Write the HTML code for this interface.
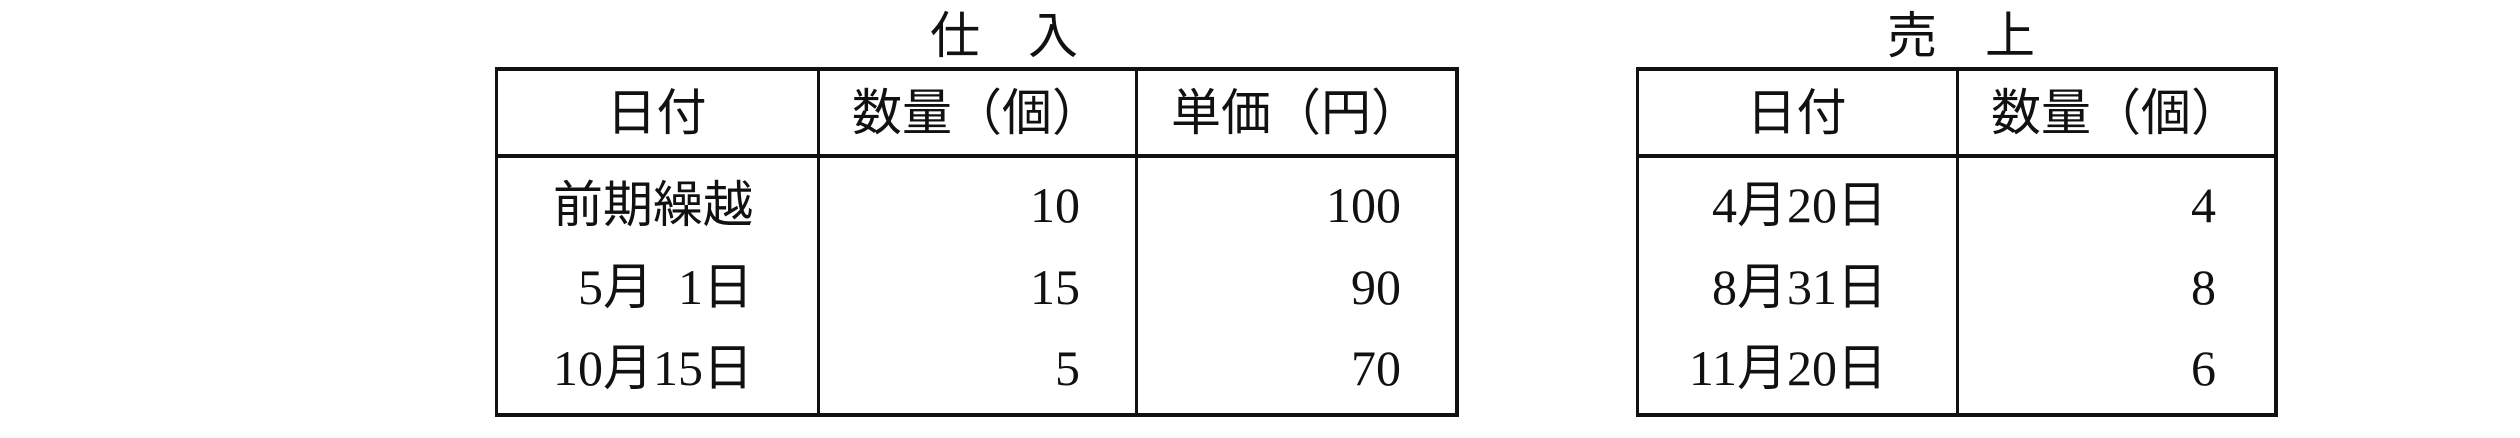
<!DOCTYPE html>
<html><head><meta charset="utf-8"><style>
html,body{margin:0;padding:0;background:#fff;}
body{width:2520px;height:438px;position:relative;overflow:hidden;font-family:"Liberation Serif","Noto Sans CJK JP",serif;color:#111;}
.t{position:absolute;font-size:50px;line-height:60px;height:60px;white-space:pre;}
.j{font-family:"Liberation Serif","Noto Sans CJK JP",sans-serif;}
.h{position:absolute;background:#111;}
</style></head><body>
<div class="h" style="left:495px;top:67px;width:964px;height:4px"></div>
<div class="h" style="left:495px;top:154px;width:964px;height:4px"></div>
<div class="h" style="left:495px;top:413px;width:964px;height:4px"></div>
<div class="h" style="left:495px;top:67px;width:3px;height:350px"></div>
<div class="h" style="left:817px;top:67px;width:3px;height:350px"></div>
<div class="h" style="left:1135px;top:67px;width:3px;height:350px"></div>
<div class="h" style="left:1455px;top:67px;width:4px;height:350px"></div>
<div class="h" style="left:1636px;top:67px;width:642px;height:4px"></div>
<div class="h" style="left:1636px;top:154px;width:642px;height:4px"></div>
<div class="h" style="left:1636px;top:413px;width:642px;height:4px"></div>
<div class="h" style="left:1636px;top:67px;width:3px;height:350px"></div>
<div class="h" style="left:1956px;top:67px;width:3px;height:350px"></div>
<div class="h" style="left:2274px;top:67px;width:4px;height:350px"></div>

<div class="t j" style="left:930px;top:6px">仕</div>
<div class="t j" style="left:1028px;top:6px">入</div>
<div class="t j" style="left:1887px;top:6px">売</div>
<div class="t j" style="left:1985px;top:6px">上</div>

<div class="t j" style="left:495px;width:323px;top:83px;text-align:center">日付</div>
<div class="t j" style="left:818px;width:318px;top:83px;text-align:center">数量（個）</div>
<div class="t j" style="left:1136px;width:320px;top:83px;text-align:center">単価（円）</div>
<div class="t j" style="left:495px;width:258px;top:175px;text-align:right">前期繰越</div>
<div class="t j" style="left:495px;width:258px;top:257px;text-align:right">5月  1日</div>
<div class="t j" style="left:495px;width:258px;top:338px;text-align:right">10月15日</div>
<div class="t" style="left:818px;width:262px;top:175px;text-align:right">10</div>
<div class="t" style="left:818px;width:262px;top:257px;text-align:right">15</div>
<div class="t" style="left:818px;width:262px;top:338px;text-align:right">5</div>
<div class="t" style="left:1136px;width:265px;top:175px;text-align:right">100</div>
<div class="t" style="left:1136px;width:265px;top:257px;text-align:right">90</div>
<div class="t" style="left:1136px;width:265px;top:338px;text-align:right">70</div>

<div class="t j" style="left:1636px;width:321px;top:83px;text-align:center">日付</div>
<div class="t j" style="left:1957px;width:318px;top:83px;text-align:center">数量（個）</div>
<div class="t j" style="left:1636px;width:251px;top:175px;text-align:right">4月20日</div>
<div class="t j" style="left:1636px;width:251px;top:257px;text-align:right">8月31日</div>
<div class="t j" style="left:1636px;width:251px;top:338px;text-align:right">11月20日</div>
<div class="t" style="left:1957px;width:259px;top:175px;text-align:right">4</div>
<div class="t" style="left:1957px;width:259px;top:257px;text-align:right">8</div>
<div class="t" style="left:1957px;width:259px;top:338px;text-align:right">6</div>
</body></html>
